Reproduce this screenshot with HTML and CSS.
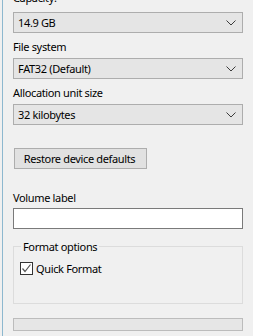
FILE: index.html
```html
<!DOCTYPE html>
<html>
<head>
<meta charset="utf-8">
<link rel="stylesheet" href="styles.css">
</head>
<body>
<div class="frame">
  <div class="dialog">
    <div class="label first">Capacity:</div>
    <div class="combo"><span>14.9 GB</span><svg class="chev" width="10" height="6" viewBox="0 0 10 6"><polyline points="0.5,0.5 5,5 9.5,0.5" fill="none" stroke="#3c3c3c" stroke-width="1"/></svg></div>
    <div class="label">File system</div>
    <div class="combo"><span>FAT32 (Default)</span><svg class="chev" width="10" height="6" viewBox="0 0 10 6"><polyline points="0.5,0.5 5,5 9.5,0.5" fill="none" stroke="#3c3c3c" stroke-width="1"/></svg></div>
    <div class="label">Allocation unit size</div>
    <div class="combo"><span>32 kilobytes</span><svg class="chev" width="10" height="6" viewBox="0 0 10 6"><polyline points="0.5,0.5 5,5 9.5,0.5" fill="none" stroke="#3c3c3c" stroke-width="1"/></svg></div>
    <button class="btn">Restore device defaults</button>
    <div class="label vol">Volume label</div>
    <div class="textbox"></div>
    <fieldset class="group">
      <legend>Format options</legend>
      <label class="check"><span class="box"><svg width="11" height="11" viewBox="0 0 11 11"><polyline points="1.5,5.5 4,8.5 9.5,1.5" fill="none" stroke="#555" stroke-width="1.2"/></svg></span>Quick Format</label>
    </fieldset>
    <div class="progress"></div>
  </div>
</div>
</body>
</html>
```
FILE: styles.css
```css
html, body {
  margin: 0;
  padding: 0;
  background: #f0f0f0;
  width: 253px;
  height: 336px;
  overflow: hidden;
}
body {
  font-family: "Noto Sans", "Open Sans", sans-serif;
  font-size: 11px;
  letter-spacing: -0.35px;
  color: #000;
}
.frame {
  height: 336px;
  padding-left: 2px;
  display: flex;
}
.dialog {
  border-left: 1px solid #8db8cf;
  padding-left: 10px;
  width: 230px;
  display: flex;
  flex-direction: column;
  align-items: flex-start;
}
.label {
  line-height: 15px;
  height: 15px;
  margin-top: 6px;
  margin-bottom: 4px;
  white-space: nowrap;
}
.label.first {
  margin-top: -10px;
  margin-bottom: 7px;
}
.combo {
  box-sizing: border-box;
  width: 230px;
  height: 21px;
  border: 1px solid #adadad;
  background: #e5e5e5;
  display: flex;
  align-items: center;
  justify-content: space-between;
  padding: 0 6px 0 4px;
  line-height: 15px;
}
.chev { display: block; margin-top: 1px; }
.btn {
  box-sizing: border-box;
  margin-top: 23px;
  margin-left: 1px;
  width: 133px;
  height: 21px;
  border: 1px solid #adadad;
  background: #e1e1e1;
  font: inherit;
  letter-spacing: inherit;
  line-height: 15px;
  padding: 0 2px 0 0;
  color: #000;
}
.label.vol {
  margin-top: 21px;
  margin-bottom: 3px;
}
.textbox {
  box-sizing: border-box;
  width: 230px;
  height: 21px;
  border: 1px solid #7a7a7a;
  background: #fff;
}
.group {
  box-sizing: border-box;
  margin: 10px 0 0 0;
  padding: 7px 6px 0 6px;
  width: 230px;
  height: 65px;
  border: 1px solid #dcdcdc;
  min-inline-size: 0;
}
.group legend {
  padding: 0 2px;
  margin-left: 1px;
  line-height: 15px;
}
.check {
  display: flex;
  align-items: center;
  line-height: 15px;
}
.box {
  box-sizing: border-box;
  width: 13px;
  height: 13px;
  border: 1px solid #333;
  background: #fff;
  margin-right: 3px;
  display: flex;
  align-items: center;
  justify-content: center;
}
.box svg { display: block; }
.progress {
  box-sizing: border-box;
  margin-top: 14px;
  width: 230px;
  height: 13px;
  border: 1px solid #bcbcbc;
  background: #e6e6e6;
}
```
